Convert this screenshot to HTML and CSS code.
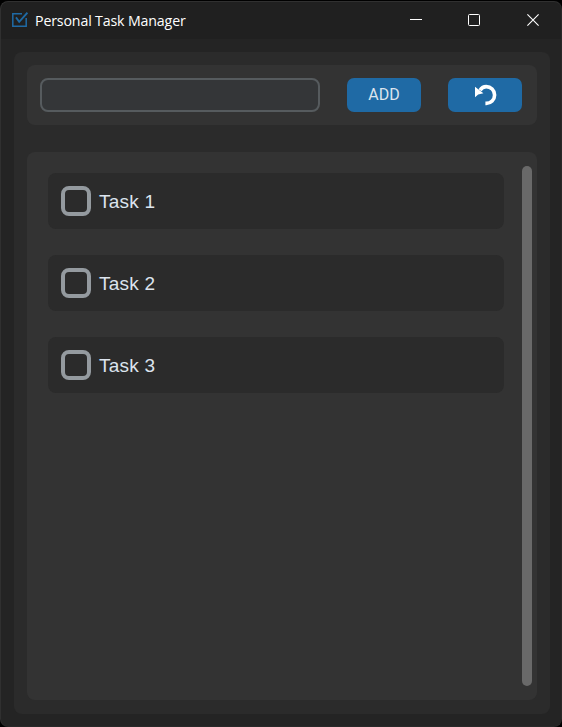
FILE: index.html
```html
<!DOCTYPE html>
<html lang="en">
<head>
<meta charset="utf-8">
<title>Personal Task Manager</title>
<link rel="stylesheet" href="styles.css">
</head>
<body>
<div class="window">
  <header class="titlebar">
    <svg class="logo" width="16" height="16" viewBox="0 0 16 16" fill="none" stroke="#1f6aa5" stroke-width="1.5"><path d="M10 1.8H.8v12.4h13.4V6"/><path d="M4 5.4l3.2 4.4L15.4.7" stroke-width="1.8"/></svg>
    <h1 class="title">Personal Task Manager</h1>
    <div class="controls">
      <svg width="12" height="12" viewBox="0 0 12 12"><path d="M0 5.5h12" stroke="#fff"/></svg>
      <svg width="12" height="12" viewBox="0 0 12 12"><rect x=".5" y=".5" width="11" height="11" rx="1" fill="none" stroke="#fff"/></svg>
      <svg width="12" height="12" viewBox="0 0 12 12"><path d="M.4.4l11.2 11.2M11.6.4L.4 11.6" stroke="#fff" stroke-width="1.1"/></svg>
    </div>
  </header>
  <main class="frame">
    <form class="toolbar">
      <input class="entry" type="text" aria-label="Task">
      <button class="button" type="button">ADD</button>
      <button class="button" type="button" aria-label="Undo">
        <svg width="22" height="22" viewBox="0 0 22 22"><path d="M5 6.2C6.6 3.8 8.6 2.6 11.2 2.6A8.2 8.2 0 0 1 11.2 19.4H10.4" fill="none" stroke="#fff" stroke-width="3.6"/><path d="M0 2.8v10.4l3.2-2.8 5.2-1.2z" fill="#fff"/></svg>
      </button>
    </form>
    <section class="list">
      <div class="tasks">
        <label class="task"><input class="check" type="checkbox"><span class="name">Task 1</span></label>
        <label class="task"><input class="check" type="checkbox"><span class="name">Task 2</span></label>
        <label class="task"><input class="check" type="checkbox"><span class="name">Task 3</span></label>
      </div>
      <div class="scrollbar"></div>
    </section>
  </main>
</div>
</body>
</html>
```
FILE: styles.css
```css
* { box-sizing: border-box; }

body {
  margin: 0;
  height: 727px;
  padding-top: 1px;
  background: #000;
  overflow: hidden;
}

.window {
  height: 726px;
  display: flex;
  flex-direction: column;
  padding: 0 11px 12px 13px;
  border: 1px solid #303030;
  border-right-color: #292929;
  border-bottom-color: #292929;
  border-radius: 8px;
  background: linear-gradient(#202020 37px, #242424 37px);
}

.titlebar {
  display: flex;
  align-items: center;
  flex: none;
  height: 37px;
  margin: 0 -11px 13px -13px;
  padding: 0 22px 0 11px;
}

.logo { margin-top: -1px; }

.title {
  margin: 1px 0 0 7px;
  font: 400 14.2px/20px "Open Sans", "Noto Sans", sans-serif;
  letter-spacing: -0.15px;
  color: #fff;
}

.controls {
  display: flex;
  margin-left: auto;
  margin-top: -1px;
  gap: 47px;
  margin-right: 0;
}

.controls svg:first-child { margin-right: -1px; }

.frame {
  flex: 1;
  display: flex;
  flex-direction: column;
  gap: 27px;
  padding: 13px 13px 14px;
  border-radius: 8px;
  background: #2b2b2b;
}

.toolbar {
  display: flex;
  gap: 27px;
  height: 60px;
  padding: 13px 15px 13px 13px;
  border-radius: 8px;
  background: #333;
}

.entry {
  width: 280px;
  height: 34px;
  padding: 0 8px;
  border: 2px solid #565b5e;
  border-radius: 8px;
  background: #343638;
  color: #dce4ee;
}

.button {
  display: flex;
  align-items: center;
  justify-content: center;
  width: 74px;
  height: 34px;
  padding: 0;
  border: 0;
  border-radius: 7px;
  background: #1f6aa5;
  color: #dce4ee;
  font: 400 16px/20px Roboto, sans-serif;
}

.button svg { margin-left: 1px; }

.list {
  flex: 1;
  display: flex;
  justify-content: space-between;
  padding: 14px 5px 14px 21px;
  border-radius: 8px;
  background: #333;
}

.tasks {
  display: flex;
  flex-direction: column;
  gap: 26px;
  width: 456px;
  padding-top: 7px;
}

.task {
  display: flex;
  align-items: center;
  gap: 8px;
  height: 56px;
  padding: 0 13px;
  border-radius: 8px;
  background: #2b2b2b;
  color: #dce4ee;
  font: 400 19px/24px "Liberation Sans", Arial, sans-serif;
  letter-spacing: 0.25px;
}

.name { padding-top: 2px; }

.check {
  appearance: none;
  width: 30px;
  height: 30px;
  margin: 0;
  border: 4px solid #949a9f;
  border-radius: 8px;
}

.scrollbar {
  width: 10px;
  border-radius: 5px;
  background: #696969;
}
```
